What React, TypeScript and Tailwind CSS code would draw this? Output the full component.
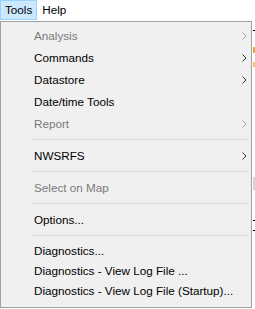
import React from 'react';

type Item =
  | { kind: 'item'; label: string; disabled?: boolean; sub?: boolean; short?: boolean }
  | { kind: 'sep' };

const items: Item[] = [
  { kind: 'item', label: 'Analysis', disabled: true, sub: true },
  { kind: 'item', label: 'Commands', sub: true },
  { kind: 'item', label: 'Datastore', sub: true },
  { kind: 'item', label: 'Date/time Tools' },
  { kind: 'item', label: 'Report', disabled: true, sub: true },
  { kind: 'sep' },
  { kind: 'item', label: 'NWSRFS', sub: true },
  { kind: 'sep' },
  { kind: 'item', label: 'Select on Map', disabled: true },
  { kind: 'sep' },
  { kind: 'item', label: 'Options...' },
  { kind: 'sep' },
  { kind: 'item', label: 'Diagnostics...', short: true },
  { kind: 'item', label: 'Diagnostics - View Log File ...', short: true },
  { kind: 'item', label: 'Diagnostics - View Log File (Startup)...', short: true },
];

function Chevron({ disabled }: { disabled?: boolean }) {
  return (
    <svg width="5" height="8" viewBox="0 0 5 8" className="shrink-0">
      <polyline
        points="0.5,0.5 4,4 0.5,7.5"
        fill="none"
        stroke={disabled ? '#a6a6a6' : '#333333'}
        strokeWidth="1"
      />
    </svg>
  );
}

export default function App() {
  return (
    <div
      className="w-[255px] h-[309px] bg-white overflow-hidden text-[11.7px] text-black"
      style={{ fontFamily: '"Liberation Sans", Arial, sans-serif' }}
    >
      {/* menu bar */}
      <div className="flex h-[21px] items-start">
        <div className="h-[20px] px-[4px] flex items-center bg-[#cce8ff] border border-[#99d1ff]">
          Tools
        </div>
        <div className="h-[20px] px-[5px] flex items-center">Help</div>
      </div>

      <div className="flex">
        {/* dropdown */}
        <div className="w-[252px] h-[287px] bg-[#f0f0f0] border border-[#a0a0a0] pt-[3px] flex flex-col shrink-0">
          {items.map((it, i) =>
            it.kind === 'sep' ? (
              <div key={i} className="h-[10px] pt-[4px] pl-[30px] pr-[2px]">
                <div className="h-px bg-[#d7d7d7]" />
              </div>
            ) : (
              <div
                key={i}
                className={`${it.short ? 'h-[20px]' : 'h-[22px]'} flex items-center pl-[33px] pr-[4px] ${
                  it.disabled ? 'text-[#7a7a7a]' : 'text-black'
                }`}
              >
                <span className="flex-1 whitespace-nowrap">{it.label}</span>
                {it.sub && <Chevron disabled={it.disabled} />}
              </div>
            )
          )}
        </div>

        {/* sliver of the window behind the menu */}
        <div className="flex flex-col w-[3px] pl-px">
          <div className="mt-[9px] h-px bg-black" />
          <div className="mt-[16px] h-[6px] bg-[#e8a33a]" />
          <div className="mt-[9px] h-[5px] bg-[#f0c060]" />
          <div className="mt-[110px] h-[13px] bg-[#d4d4d4]" />
          <div className="mt-[30px] h-px bg-black" />
          <div className="mt-[9px] h-px bg-black" />
        </div>
      </div>
    </div>
  );
}
